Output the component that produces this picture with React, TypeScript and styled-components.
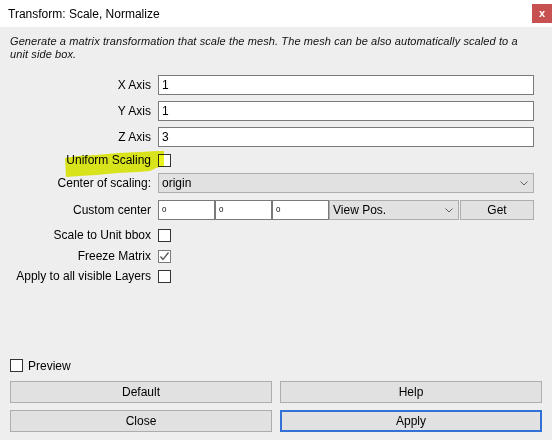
import React from 'react';
import styled, { createGlobalStyle } from 'styled-components';

const GlobalStyle = createGlobalStyle`
  html, body {
    margin: 0;
    padding: 0;
    background: #eeeeee;
    font-family: 'Liberation Sans', Arial, sans-serif;
  }
`;

const Window = styled.div`
  position: relative;
  width: 552px;
  height: 440px;
  display: flex;
  flex-direction: column;
  background: #eeeeee;
  color: #000;
  font-size: 12px;
  overflow: hidden;
`;

const TitleBar = styled.div`
  height: 27px;
  flex: 0 0 27px;
  background: #ffffff;
  display: flex;
  align-items: flex-start;
  justify-content: space-between;
  padding-left: 8px;
  box-sizing: border-box;
`;

const Title = styled.span`
  margin-top: 7px;
  font-size: 12px;
  color: #000;
`;

const CloseButton = styled.div`
  margin-top: 4px;
  width: 20px;
  height: 19px;
  background: #c75050;
  color: #fff;
  font-size: 11px;
  font-weight: bold;
  display: flex;
  align-items: center;
  justify-content: center;
  line-height: 1;
`;

const Body = styled.div`
  flex: 1;
  padding: 8px 18px 0 10px;
  display: flex;
  flex-direction: column;
`;

const Description = styled.p`
  margin: 0;
  font-size: 11px;
  line-height: 13px;
  font-style: italic;
  letter-spacing: 0.1px;
  color: #111;
  width: 526px;
`;

const Form = styled.div`
  margin-top: 14px;
  display: flex;
  flex-direction: column;
`;

const Row = styled.div<{ $top?: number }>`
  display: flex;
  align-items: center;
  margin-top: ${(p) => p.$top ?? 0}px;
`;

const Label = styled.div`
  width: 141px;
  flex: 0 0 141px;
  margin-right: 7px;
  text-align: right;
  white-space: nowrap;
  font-size: 12px;
`;

const Controls = styled.div`
  flex: 1;
  display: flex;
  align-items: center;
`;

const TextInput = styled.div<{ $small?: boolean; $width?: number }>`
  box-sizing: border-box;
  height: 20px;
  flex: ${(p) => (p.$width ? `0 0 ${p.$width}px` : '1')};
  background: #fff;
  border: 1px solid #7a7a7a;
  padding-left: 3px;
  display: flex;
  align-items: center;
  font-size: ${(p) => (p.$small ? '8px' : '12px')};
  padding-bottom: ${(p) => (p.$small ? '2px' : '0')};
`;

const Combo = styled.div<{ $width?: number }>`
  box-sizing: border-box;
  height: 20px;
  flex: ${(p) => (p.$width ? `0 0 ${p.$width}px` : '1')};
  background: #e1e1e1;
  border: 1px solid #adadad;
  padding: 0 5px 0 3px;
  display: flex;
  align-items: center;
  justify-content: space-between;
  font-size: 12px;
`;

const Button = styled.div<{ $focused?: boolean }>`
  box-sizing: border-box;
  height: 22px;
  background: #e1e1e1;
  border: ${(p) => (p.$focused ? '2px solid #3371d6' : '1px solid #adadad')};
  display: flex;
  align-items: center;
  justify-content: center;
  font-size: 12px;
`;

const SmallButton = styled(Button)`
  flex: 1;
  height: 20px;
  margin-left: 1px;
`;

const Box = styled.div<{ $muted?: boolean }>`
  box-sizing: border-box;
  width: 13px;
  height: 13px;
  flex: 0 0 13px;
  background: #fff;
  border: 1px solid ${(p) => (p.$muted ? '#7a7a7a' : '#333')};
  display: flex;
  align-items: center;
  justify-content: center;
`;

const Footer = styled.div`
  padding: 0 10px 8px 10px;
  display: flex;
  flex-direction: column;
`;

const PreviewRow = styled.div`
  display: flex;
  align-items: center;
  gap: 5px;
  height: 13px;
  margin-bottom: 9px;
`;

const ButtonGrid = styled.div`
  display: grid;
  grid-template-columns: 1fr 1fr;
  column-gap: 8px;
  row-gap: 7px;
`;

const Highlight = styled.svg`
  position: absolute;
  left: 0;
  top: 0;
  pointer-events: none;
  mix-blend-mode: multiply;
`;

const Chevron = () => (
  <svg width="8" height="5" viewBox="0 0 8 5">
    <path d="M0.5 0.5 L4 4 L7.5 0.5" fill="none" stroke="#606060" strokeWidth="1" />
  </svg>
);

const Check = () => (
  <svg width="11" height="11" viewBox="0 0 11 11">
    <path d="M1.5 5.5 L4 8.5 L9.5 1.5" fill="none" stroke="#5a5a5a" strokeWidth="1.4" />
  </svg>
);

const App: React.FC = () => {
  return (
    <Window>
      <GlobalStyle />
      <TitleBar>
        <Title>Transform: Scale, Normalize</Title>
        <CloseButton>x</CloseButton>
      </TitleBar>
      <Body>
        <Description>
          Generate a matrix transformation that scale the mesh. The mesh can be also automatically scaled to a unit side box.
        </Description>
        <Form>
          <Row>
            <Label>X Axis</Label>
            <Controls><TextInput>1</TextInput></Controls>
          </Row>
          <Row $top={6}>
            <Label>Y Axis</Label>
            <Controls><TextInput>1</TextInput></Controls>
          </Row>
          <Row $top={6}>
            <Label>Z Axis</Label>
            <Controls><TextInput>3</TextInput></Controls>
          </Row>
          <Row $top={6}>
            <Label>Uniform Scaling</Label>
            <Controls><Box /></Controls>
          </Row>
          <Row $top={6}>
            <Label>Center of scaling:</Label>
            <Controls>
              <Combo>origin<Chevron /></Combo>
            </Controls>
          </Row>
          <Row $top={7}>
            <Label>Custom center</Label>
            <Controls>
              <TextInput $small $width={57}>0</TextInput>
              <TextInput $small $width={57}>0</TextInput>
              <TextInput $small $width={57}>0</TextInput>
              <Combo $width={130}>View Pos.<Chevron /></Combo>
              <SmallButton>Get</SmallButton>
            </Controls>
          </Row>
          <Row $top={8}>
            <Label>Scale to Unit bbox</Label>
            <Controls><Box /></Controls>
          </Row>
          <Row $top={7}>
            <Label>Freeze Matrix</Label>
            <Controls><Box $muted><Check /></Box></Controls>
          </Row>
          <Row $top={6}>
            <Label>Apply to all visible Layers</Label>
            <Controls><Box /></Controls>
          </Row>
        </Form>
      </Body>
      <Footer>
        <PreviewRow>
          <Box />
          <span>Preview</span>
        </PreviewRow>
        <ButtonGrid>
          <Button>Default</Button>
          <Button>Help</Button>
          <Button>Close</Button>
          <Button $focused>Apply</Button>
        </ButtonGrid>
      </Footer>
      <Highlight width="552" height="440" viewBox="0 0 552 440">
        <path
          d="M65 158 L78 156 L96 155 L118 153 L140 152 L156 151 L164 151 L164 166 L156 168 L150 171 L138 172 L118 173 L96 175 L80 176 L66 177 Z"
          fill="#e9f41e"
        />
      </Highlight>
    </Window>
  );
};

export default App;
